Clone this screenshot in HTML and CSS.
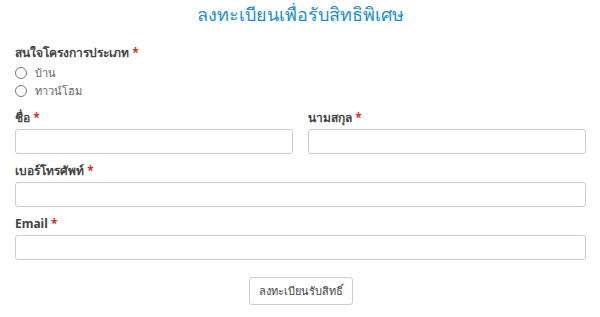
FILE: index.html
```html
<!DOCTYPE html>
<html lang="th">
<head>
    <meta charset="UTF-8">
    <title>ลงทะเบียน</title>
    <link rel="stylesheet" href="styles.css">
</head>
<body>
    <form class="reg-form">
        <h1 class="title">ลงทะเบียนเพื่อรับสิทธิพิเศษ</h1>

        <div class="field choices">
            <label class="label">สนใจโครงการประเภท <span class="req">*</span></label>
            <label class="radio"><input type="radio" name="type"> บ้าน</label>
            <label class="radio"><input type="radio" name="type"> ทาวน์โฮม</label>
        </div>

        <div class="row">
            <div class="field">
                <label class="label" for="firstName">ชื่อ <span class="req">*</span></label>
                <input class="text" type="text" id="firstName">
            </div>
            <div class="field">
                <label class="label" for="lastName">นามสกุล <span class="req">*</span></label>
                <input class="text" type="text" id="lastName">
            </div>
        </div>

        <div class="field">
            <label class="label" for="phone">เบอร์โทรศัพท์ <span class="req">*</span></label>
            <input class="text" type="text" id="phone">
        </div>

        <div class="field">
            <label class="label" for="email">Email <span class="req">*</span></label>
            <input class="text" type="email" id="email">
        </div>

        <div class="actions">
            <button type="submit" class="btn">ลงทะเบียนรับสิทธิ์</button>
        </div>
    </form>
</body>
</html>
```

FILE: styles.css
```css
body {
    margin: 0;
    background: #fff;
    font-family: "Noto Sans", "DejaVu Sans", sans-serif;
    color: #444;
}
.reg-form {
    padding: 0 14px 0 15px;
}
.title {
    margin: 2px 0 18px;
    text-align: center;
    font-size: 18px;
    font-weight: normal;
    color: #1a8fd0;
    line-height: 24px;
}
.field {
    display: flex;
    flex-direction: column;
    margin-bottom: 8px;
    flex: 1;
}
.choices {
    margin-bottom: 9px;
}
.label {
    font-size: 12px;
    font-weight: bold;
    color: #444;
    line-height: 17px;
    margin-bottom: 3px;
}
.req {
    color: #c0392b;
}
.radio {
    display: flex;
    align-items: center;
    font-size: 11px;
    color: #666;
    line-height: 18px;
}
.radio input {
    margin: 0 8px 0 0;
    width: 12px;
    height: 12px;
}
.row {
    display: flex;
    gap: 15px;
}
.text {
    box-sizing: border-box;
    height: 25px;
    border: 1px solid #ccc;
    border-radius: 3px;
    width: 100%;
    margin: 0;
}
.actions {
    display: flex;
    justify-content: center;
    margin-top: 17px;
}
.btn {
    font-family: inherit;
    font-size: 11px;
    color: #444;
    background: #fff;
    border: 1px solid #ccc;
    border-radius: 3px;
    padding: 0 9px;
    height: 28px;
}
```
